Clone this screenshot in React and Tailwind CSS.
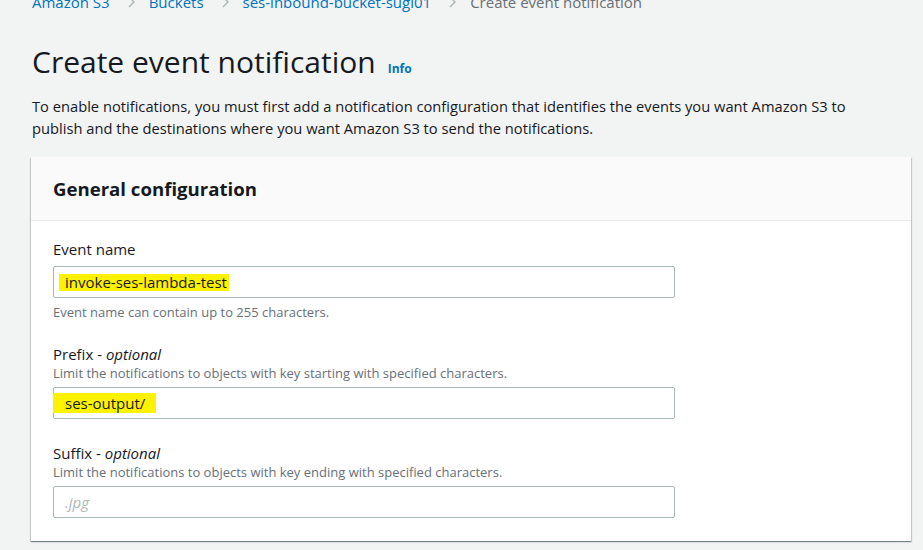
import React from "react";

const font = { fontFamily: '"Open Sans", "Noto Sans", sans-serif' };

const Crumb = ({ children, last }) => (
    <span className={last ? "text-[#687078]" : "text-[#0073bb]"}>{children}</span>
);

const Chevron = () => (
    <svg width="11" height="12" viewBox="0 0 11 12" className="ml-[16px] mr-[12px] text-[#aab7b8]">
        <path d="M3 1l5 5-5 5" fill="none" stroke="currentColor" strokeWidth="1.4" />
    </svg>
);

const Field = ({ label, optional, hint, value, placeholder, highlight, after }) => (
    <div>
        <div className="text-[15px] leading-[22px] text-[#16191f]">
            {label}
            {optional && <span> - <i>optional</i></span>}
        </div>
        {hint && <div className="text-[13px] leading-[16px] text-[#687078]">{hint}</div>}
        <div className="mt-[6px] h-[32px] w-[622px] border border-[#aab7b8] rounded-[2px] bg-white flex items-center pl-[11px] text-[15px] text-[#16191f]">
            {value ? (
                <span className={highlight}>{value}</span>
            ) : (
                <span className="italic text-[#aab7b8]">{placeholder}</span>
            )}
        </div>
        {after && <div className="mt-[6px] text-[13px] leading-[16px] text-[#687078]">{after}</div>}
    </div>
);

export default function App() {
    return (
        <div style={font} className="w-[923px] h-[550px] overflow-hidden bg-[#f2f3f3] text-[#16191f]">
            <div className="pl-[32px] -mt-[8px] h-[20px] flex items-center text-[15px]">
                <Crumb>Amazon S3</Crumb>
                <Chevron />
                <Crumb>Buckets</Crumb>
                <Chevron />
                <Crumb>ses-inbound-bucket-sugi01</Crumb>
                <Chevron />
                <Crumb last>Create event notification</Crumb>
            </div>

            <div className="pl-[32px] mt-[30px] flex items-baseline">
                <h1 className="text-[30px] leading-[40px] font-normal">Create event notification</h1>
                <a className="ml-[12px] text-[12px] font-bold text-[#0073bb]">Info</a>
            </div>

            <p className="pl-[32px] pr-[40px] mt-[13px] text-[14.7px] leading-[22px]">
                To enable notifications, you must first add a notification configuration that identifies the events you want Amazon S3 to publish and the destinations where you want Amazon S3 to send the notifications.
            </p>

            <div className="ml-[31px] mt-[18px] w-[880px] bg-white shadow-[0_1px_1px_0_rgba(0,28,36,0.3),1px_1px_1px_0_rgba(0,28,36,0.15),-1px_1px_1px_0_rgba(0,28,36,0.15)]">
                <div className="h-[64px] bg-[#fafafa] border-b border-[#eaeded] flex items-center pl-[22px]">
                    <h2 className="text-[18.6px] font-bold">General configuration</h2>
                </div>
                <div className="px-[22px] pt-[17px] pb-[23px] flex flex-col gap-[23px]">
                    <Field
                        label="Event name"
                        value="invoke-ses-lambda-test"
                        highlight="bg-[#fff200] -ml-[6px] pl-[6px] pr-[2px] leading-[17px]"
                        after="Event name can contain up to 255 characters."
                    />
                    <Field
                        label="Prefix"
                        optional
                        hint="Limit the notifications to objects with key starting with specified characters."
                        value="ses-output/"
                        highlight="bg-[#fff200] -ml-[12px] pl-[12px] pr-[11px] leading-[20px]"
                    />
                    <Field
                        label="Suffix"
                        optional
                        hint="Limit the notifications to objects with key ending with specified characters."
                        placeholder=".jpg"
                    />
                </div>
            </div>
        </div>
    );
}
